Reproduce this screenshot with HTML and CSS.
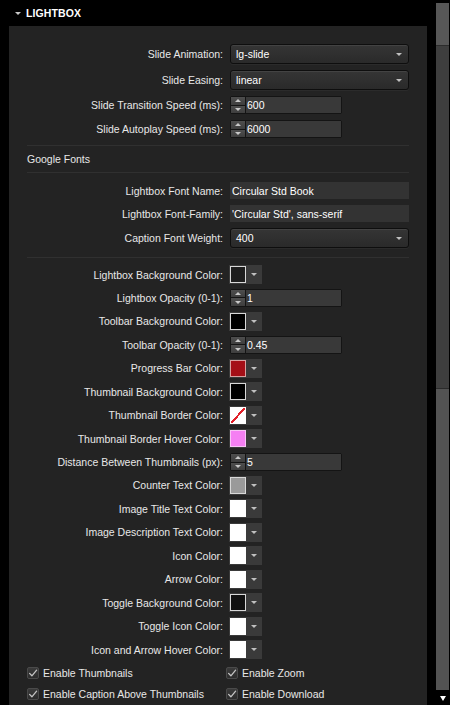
FILE: index.html
```html
<!DOCTYPE html>
<html>
<head>
<meta charset="utf-8">
<title>Lightbox</title>
<link rel="stylesheet" href="styles.css">
</head>
<body>
<div class="page">
  <div class="main">
    <div class="header"><span class="caret"></span>LIGHTBOX</div>
    <div class="panel">
      <div class="group g1">
        <div class="row"><span class="lbl">Slide Animation:</span><div class="select"><span>lg-slide</span><i class="arrow"></i></div></div>
        <div class="row"><span class="lbl">Slide Easing:</span><div class="select"><span>linear</span><i class="arrow"></i></div></div>
        <div class="row"><span class="lbl">Slide Transition Speed (ms):</span><div class="spin"><div class="spin-btns"><span class="up"></span><span class="down"></span></div><div class="spin-val">600</div></div></div>
        <div class="row"><span class="lbl">Slide Autoplay Speed (ms):</span><div class="spin"><div class="spin-btns"><span class="up"></span><span class="down"></span></div><div class="spin-val">6000</div></div></div>
      </div>
      <div class="sep s1"></div>
      <div class="section-title">Google Fonts</div>
      <div class="sep"></div>
      <div class="group g2">
        <div class="row r17"><span class="lbl">Lightbox Font Name:</span><div class="text">Circular Std Book</div></div>
        <div class="row r17"><span class="lbl">Lightbox Font-Family:</span><div class="text">'Circular Std', sans-serif</div></div>
        <div class="row"><span class="lbl">Caption Font Weight:</span><div class="select"><span>400</span><i class="arrow"></i></div></div>
      </div>
      <div class="sep s2"></div>
      <div class="group g3">
        <div class="row r19"><span class="lbl">Lightbox Background Color:</span><div class="cp"><span class="sw c-dark"></span><span class="cp-drop"><i class="arrow"></i></span></div></div>
        <div class="row r19"><span class="lbl">Lightbox Opacity (0-1):</span><div class="spin"><div class="spin-btns"><span class="up"></span><span class="down"></span></div><div class="spin-val">1</div></div></div>
        <div class="row r19"><span class="lbl">Toolbar Background Color:</span><div class="cp"><span class="sw c-black"></span><span class="cp-drop"><i class="arrow"></i></span></div></div>
        <div class="row r19"><span class="lbl">Toolbar Opacity (0-1):</span><div class="spin"><div class="spin-btns"><span class="up"></span><span class="down"></span></div><div class="spin-val">0.45</div></div></div>
        <div class="row r19"><span class="lbl">Progress Bar Color:</span><div class="cp"><span class="sw c-red"></span><span class="cp-drop"><i class="arrow"></i></span></div></div>
        <div class="row r19"><span class="lbl">Thumbnail Background Color:</span><div class="cp"><span class="sw c-black"></span><span class="cp-drop"><i class="arrow"></i></span></div></div>
        <div class="row r19"><span class="lbl">Thumbnail Border Color:</span><div class="cp"><span class="sw c-none"></span><span class="cp-drop"><i class="arrow"></i></span></div></div>
        <div class="row r19"><span class="lbl">Thumbnail Border Hover Color:</span><div class="cp"><span class="sw c-pink"></span><span class="cp-drop"><i class="arrow"></i></span></div></div>
        <div class="row r19"><span class="lbl">Distance Between Thumbnails (px):</span><div class="spin"><div class="spin-btns"><span class="up"></span><span class="down"></span></div><div class="spin-val">5</div></div></div>
        <div class="row r19"><span class="lbl">Counter Text Color:</span><div class="cp"><span class="sw c-gray"></span><span class="cp-drop"><i class="arrow"></i></span></div></div>
        <div class="row r19"><span class="lbl">Image Title Text Color:</span><div class="cp"><span class="sw c-white"></span><span class="cp-drop"><i class="arrow"></i></span></div></div>
        <div class="row r19"><span class="lbl">Image Description Text Color:</span><div class="cp"><span class="sw c-white"></span><span class="cp-drop"><i class="arrow"></i></span></div></div>
        <div class="row r19"><span class="lbl">Icon Color:</span><div class="cp"><span class="sw c-white"></span><span class="cp-drop"><i class="arrow"></i></span></div></div>
        <div class="row r19"><span class="lbl">Arrow Color:</span><div class="cp"><span class="sw c-white"></span><span class="cp-drop"><i class="arrow"></i></span></div></div>
        <div class="row r19"><span class="lbl">Toggle Background Color:</span><div class="cp"><span class="sw c-toggle"></span><span class="cp-drop"><i class="arrow"></i></span></div></div>
        <div class="row r19"><span class="lbl">Toggle Icon Color:</span><div class="cp"><span class="sw c-white"></span><span class="cp-drop"><i class="arrow"></i></span></div></div>
        <div class="row r19"><span class="lbl">Icon and Arrow Hover Color:</span><div class="cp"><span class="sw c-white"></span><span class="cp-drop"><i class="arrow"></i></span></div></div>
      </div>
      <div class="checks">
        <label class="chk"><span class="box"><svg viewBox="0 0 12 12" width="12" height="12"><path d="M2.6 6.4 L4.9 8.8 L9.6 3.2" fill="none" stroke="#c4c4c4" stroke-width="1.3" stroke-linecap="round" stroke-linejoin="round"/></svg></span>Enable Thumbnails</label>
        <label class="chk"><span class="box"><svg viewBox="0 0 12 12" width="12" height="12"><path d="M2.6 6.4 L4.9 8.8 L9.6 3.2" fill="none" stroke="#c4c4c4" stroke-width="1.3" stroke-linecap="round" stroke-linejoin="round"/></svg></span>Enable Zoom</label>
        <label class="chk"><span class="box"><svg viewBox="0 0 12 12" width="12" height="12"><path d="M2.6 6.4 L4.9 8.8 L9.6 3.2" fill="none" stroke="#c4c4c4" stroke-width="1.3" stroke-linecap="round" stroke-linejoin="round"/></svg></span>Enable Caption Above Thumbnails</label>
        <label class="chk"><span class="box"><svg viewBox="0 0 12 12" width="12" height="12"><path d="M2.6 6.4 L4.9 8.8 L9.6 3.2" fill="none" stroke="#c4c4c4" stroke-width="1.3" stroke-linecap="round" stroke-linejoin="round"/></svg></span>Enable Download</label>
      </div>
    </div>
  </div>
  <div class="scroll">
    <div class="sb-a"></div>
    <div class="sb-b"></div>
    <div class="sb-c"></div>
    <div class="sb-arrow"><i></i></div>
  </div>
</div>
</body>
</html>
```

FILE: styles.css
```css
html, body {
  margin: 0;
  padding: 0;
  background: #000;
}
body {
  font-family: "Liberation Sans", Arial, sans-serif;
  font-size: 10.5px;
  color: #e8e8e8;
}
.page {
  display: flex;
  width: 450px;
  height: 705px;
  overflow: hidden;
}
.main {
  width: 436px;
  flex: none;
}
.header {
  height: 26px;
  display: flex;
  align-items: center;
  padding-left: 15px;
  color: #fff;
  font-weight: bold;
  font-size: 10.5px;
  letter-spacing: 0.1px;
}
.caret {
  width: 0;
  height: 0;
  border-left: 3px solid transparent;
  border-right: 3px solid transparent;
  border-top: 3px solid #c8c8c8;
  margin-right: 5px;
  margin-top: 1px;
}
.panel {
  margin-left: 9px;
  width: 418px;
  box-sizing: border-box;
  background: #232323;
  padding: 18px 18px 0 18px;
  height: 679px;
}
.group {
  display: flex;
  flex-direction: column;
}
.g1 { gap: 6px; }
.g2 { gap: 6px; margin-top: 9px; }
.g3 { gap: 4.44px; margin-top: 7px; }
.row {
  display: flex;
  align-items: center;
}
.r17 { height: 17px; }
.r19 { height: 19px; }
.lbl {
  width: 196px;
  flex: none;
  text-align: right;
  margin-right: 7px;
  white-space: nowrap;
}
.sep {
  height: 1px;
  background: #303030;
}
.s1 { margin-top: 7px; }
.s2 { margin-top: 9px; }
.section-title {
  height: 26px;
  display: flex;
  align-items: center;
  color: #e8e8e8;
}
.select {
  width: 179px;
  height: 20px;
  box-sizing: border-box;
  border: 1px solid #0e0e0e;
  border-radius: 3px;
  background: linear-gradient(#353535, #2a2a2a);
  box-shadow: inset 0 1px 0 rgba(255,255,255,0.07), 0 1px 0 rgba(255,255,255,0.04);
  display: flex;
  align-items: center;
  justify-content: space-between;
  padding: 0 6px 0 5px;
  color: #fff;
}
.arrow {
  display: block;
  width: 0;
  height: 0;
  border-left: 3px solid transparent;
  border-right: 3px solid transparent;
  border-top: 3px solid #c0c0c0;
}
.spin {
  width: 112px;
  height: 18px;
  box-sizing: border-box;
  border: 1px solid #141414;
  border-radius: 2px;
  background: #141414;
  display: flex;
}
.spin-btns {
  width: 14px;
  flex: none;
  display: flex;
  flex-direction: column;
  gap: 1px;
}
.spin-btns span {
  flex: 1;
  background: linear-gradient(#4e4e4e, #3e3e3e);
  display: flex;
  align-items: center;
  justify-content: center;
}
.spin-btns .up::before {
  content: "";
  border-left: 3px solid transparent;
  border-right: 3px solid transparent;
  border-bottom: 3px solid #c8c8c8;
}
.spin-btns .down::before {
  content: "";
  border-left: 3px solid transparent;
  border-right: 3px solid transparent;
  border-top: 3px solid #c8c8c8;
}
.spin-val {
  flex: 1;
  margin-left: 1px;
  background: #393939;
  display: flex;
  align-items: center;
  padding-left: 1px;
  color: #fff;
}
.text {
  width: 179px;
  height: 17px;
  box-sizing: border-box;
  background: #333;
  display: flex;
  align-items: center;
  padding-left: 2px;
  color: #fff;
}
.cp {
  width: 33px;
  height: 19px;
  box-sizing: border-box;
  padding: 1px;
  background: #3a3a3a;
  display: flex;
  margin-left: -1px;
}
.sw {
  width: 16px;
  height: 17px;
  box-sizing: border-box;
  border: 1px solid #d8d8d8;
  flex: none;
}
.cp-drop {
  flex: 1;
  display: flex;
  align-items: center;
  justify-content: center;
}
.c-dark { background: #1e1e1e; }
.c-black { background: #000; }
.c-red { background: #a50f17; border-color: #d9a0a0; }
.c-pink { background: #f57ff3; border-color: #f9c4f7; }
.c-gray { background: #9a9a9a; }
.c-white { background: #fff; border-color: #fff; }
.c-toggle { background: #111; }
.c-none {
  background: linear-gradient(to bottom right, #fff calc(50% - 1px), #e2202a calc(50% - 1px), #e2202a calc(50% + 1px), #fff calc(50% + 1px));
  border-color: #fff;
}
.checks {
  display: grid;
  grid-template-columns: 199px 1fr;
  row-gap: 5px;
  margin-top: 5.5px;
}
.chk {
  display: flex;
  align-items: center;
  height: 16px;
  white-space: nowrap;
  color: #e8e8e8;
}
.box {
  width: 12px;
  height: 12px;
  box-sizing: border-box;
  border: 1px solid #4a4a4a;
  border-radius: 2px;
  background: linear-gradient(#3a3a3a, #2c2c2c);
  margin-right: 4px;
  display: flex;
  align-items: center;
  justify-content: center;
  overflow: hidden;
}
.box svg {
  flex: none;
}
.scroll {
  width: 13px;
  flex: none;
  padding-top: 3px;
  display: flex;
  flex-direction: column;
}
.sb-a {
  height: 42px;
  background: #575757;
  border-bottom: 1px solid #2c2c2c;
}
.sb-b {
  height: 342px;
  background: #3e3e3e;
  border-bottom: 1px solid #2a2a2a;
}
.sb-c {
  height: 301px;
  background: #535353;
}
.sb-arrow {
  height: 15px;
  display: flex;
  align-items: center;
  justify-content: center;
}
.sb-arrow i {
  display: block;
  width: 0;
  height: 0;
  border-left: 3.5px solid transparent;
  border-right: 3.5px solid transparent;
  border-top: 5px solid #fff;
  margin-top: 1px;
}
```
